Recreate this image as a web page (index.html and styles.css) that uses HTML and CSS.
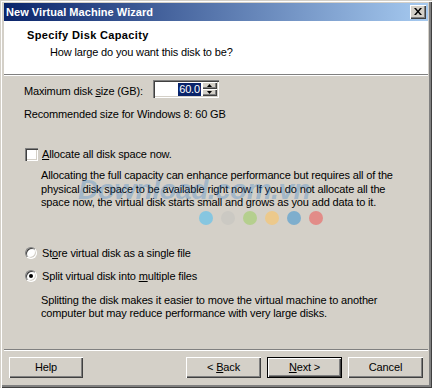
FILE: index.html
```html
<!DOCTYPE html>
<html>
<head>
<meta charset="utf-8">
<link rel="stylesheet" href="styles.css">
</head>
<body>
<div class="window">
  <div class="titlebar">
    <span class="title">New Virtual Machine Wizard</span>
    <span class="close"><svg width="8" height="7" viewBox="0 0 8 7"><path d="M0 0h2l2 2.5L6 0h2L5 3.5 8 7H6L4 4.5 2 7H0l3-3.5z" fill="#000"/></svg></span>
  </div>
  <div class="header">
    <div class="h-title">Specify Disk Capacity</div>
    <div class="h-sub">How large do you want this disk to be?</div>
  </div>
  <div class="body">
    <div class="size-row">
      <span class="size-label">Maximum disk <u>s</u>ize (GB):</span>
      <span class="spin">
        <span class="spin-field"><span class="sel">60.0</span></span>
        <span class="spin-btns">
          <span class="sbtn"><svg width="5" height="3" viewBox="0 0 5 3"><path d="M2.5 0L5 3H0z" fill="#000"/></svg></span>
          <span class="sbtn"><svg width="5" height="3" viewBox="0 0 5 3"><path d="M0 0h5L2.5 3z" fill="#000"/></svg></span>
        </span>
      </span>
    </div>
    <div class="rec">Recommended size for Windows 8: 60 GB</div>
    <div class="opt check-opt"><span class="checkbox"></span><span><u>A</u>llocate all disk space now.</span></div>
    <div class="desc desc1">Allocating the full capacity can enhance performance but requires all of the physical disk space to be available right now. If you do not allocate all the space now, the virtual disk starts small and grows as you add data to it.</div>
    <div class="dots">
      <span class="dot d1"></span><span class="dot d2"></span><span class="dot d3"></span><span class="dot d4"></span><span class="dot d5"></span><span class="dot d6"></span>
    </div>
    <div class="opt radio-opt r1"><span class="radio"></span><span>St<u>o</u>re virtual disk as a single file</span></div>
    <div class="opt radio-opt r2"><span class="radio on"></span><span>Split virtual disk into <u>m</u>ultiple files</span></div>
    <div class="desc desc2">Splitting the disk makes it easier to move the virtual machine to another computer but may reduce performance with very large disks.</div>
    <div class="watermark">Download.com.vn</div>
  </div>
  <div class="buttons">
    <span class="btn help"><span>Help</span></span>
    <span class="spacer"></span>
    <span class="btn"><span>&lt; <u>B</u>ack</span></span>
    <span class="btn default"><span><u>N</u>ext &gt;</span></span>
    <span class="btn"><span>Cancel</span></span>
  </div>
</div>
</body>
</html>
```

FILE: styles.css
```css
* { box-sizing: border-box; }
html, body { margin: 0; padding: 0; }
body {
  width: 432px;
  height: 388px;
  overflow: hidden;
  font-family: "Liberation Sans", Arial, sans-serif;
  font-size: 11px;
  letter-spacing: -0.15px;
  color: #000;
}
u { text-decoration: underline; text-underline-offset: 1px; }
.window {
  width: 432px;
  height: 388px;
  background: #d4d0c8;
  padding: 3px 3px 3px 4px;
  box-shadow: inset 1px 1px 0 #d4d0c8, inset 2px 2px 0 #fff, inset -1px -1px 0 #404040, inset -3px -3px 0 #808080;
  display: flex;
  flex-direction: column;
}
.titlebar {
  height: 18px;
  background: linear-gradient(to right, #0a246a, #a6caf0);
  display: flex;
  align-items: center;
  padding: 0 2px 0 2px;
  margin-right: 1px;
}
.title {
  color: #fff;
  font-weight: bold;
  font-size: 11px;
  flex: 1;
  letter-spacing: 0.05px;
}
.close {
  flex: none;
  width: 16px;
  height: 14px;
  background: #d4d0c8;
  box-shadow: inset 1px 1px 0 #fff, inset -1px -1px 0 #404040, inset -2px -2px 0 #808080;
  display: flex;
  align-items: center;
  justify-content: center;
  padding-right: 1px;
  padding-bottom: 1px;
}
.header {
  background: #fff;
  height: 54px;
  border-bottom: 1px solid #808080;
  box-shadow: 0 1px 0 #fff;
  padding: 8px 0 0 23px;
  margin-right: 1px;
}
.h-title { font-weight: bold; line-height: 13px; letter-spacing: 0.35px; }
.h-sub { padding-left: 23px; margin-top: 4px; line-height: 13px; }
.body {
  position: relative;
  flex: 1;
  padding: 5px 0 0 20px;
}
.size-row {
  display: flex;
  align-items: center;
  height: 18px;
}
.size-label { flex: none; width: 129px; padding-top: 3px; }
.spin {
  flex: none;
  width: 66px;
  height: 18px;
  display: flex;
  background: #fff;
  box-shadow: inset 1px 1px 0 #808080, inset 2px 2px 0 #404040, inset -1px -1px 0 #fff, inset -2px -2px 0 #d4d0c8;
  padding: 2px;
}
.spin-field {
  flex: 1;
  display: flex;
  justify-content: flex-end;
  align-items: center;
  padding-right: 1px;
}
.sel {
  background: #0a246a;
  color: #fff;
  line-height: 13px;
  padding: 0 1px;
}
.spin-btns {
  flex: none;
  width: 15px;
  display: flex;
  flex-direction: column;
}
.sbtn {
  flex: 1;
  background: #d4d0c8;
  box-shadow: inset 1px 1px 0 #fff, inset -1px -1px 0 #404040, inset -2px -2px 0 #808080;
  display: flex;
  align-items: center;
  justify-content: center;
}
.rec { margin-top: 10px; line-height: 13px; }
.opt {
  display: flex;
  align-items: center;
  line-height: 13px;
}
.check-opt { margin-top: 27px; }
.checkbox {
  flex: none;
  width: 13px;
  height: 13px;
  background: #fff;
  box-shadow: inset 1px 1px 0 #808080, inset 2px 2px 0 #404040, inset -1px -1px 0 #fff, inset -2px -2px 0 #d4d0c8;
  margin: 0 4px 0 1px;
}
.desc { padding-left: 17px; width: 379px; line-height: 13.5px; }
.desc1 { margin-top: 8px; }
.dots {
  display: flex;
  gap: 8px;
  padding-left: 175px;
  margin-top: 1px;
}
.dot { width: 14px; height: 14px; border-radius: 50%; }
.d1 { background: #86c6e0; }
.d2 { background: #cbc9c3; }
.d3 { background: #b5cf8e; }
.d4 { background: #ecc98c; }
.d5 { background: #7eaecd; }
.d6 { background: #e28c88; }
.radio-opt.r1 { margin-top: 22px; }
.radio-opt.r2 { margin-top: 10px; }
.radio {
  flex: none;
  width: 12px;
  height: 12px;
  border-radius: 50%;
  background: #fff;
  border: 1px solid #808080;
  border-right-color: #fff;
  border-bottom-color: #fff;
  box-shadow: inset 1px 1px 0 #404040, inset -1px -1px 0 #d4d0c8;
  margin: 0 5px 0 1px;
  display: flex;
  align-items: center;
  justify-content: center;
}
.radio.on::after {
  content: "";
  width: 4px;
  height: 4px;
  border-radius: 50%;
  background: #000;
}
.desc2 { margin-top: 11px; }
.watermark {
  position: absolute;
  left: 74px;
  top: 99px;
  font-size: 28px;
  font-weight: bold;
  font-style: italic;
  color: rgba(40, 120, 200, 0.3);
  letter-spacing: -0.5px;
  pointer-events: none;
}
.buttons {
  border-top: 1px solid #808080;
  box-shadow: inset 0 1px 0 #fff;
  height: 34px;
  margin-bottom: 2px;
  margin-right: 1px;
  display: flex;
  align-items: flex-start;
  padding: 7px 5px 0 5px;
  gap: 6px;
}
.spacer { flex: 1; }
.btn {
  flex: none;
  width: 75px;
  height: 21px;
  display: flex;
  align-items: center;
  justify-content: center;
  background: #d4d0c8;
  box-shadow: inset 1px 1px 0 #fff, inset -1px -1px 0 #404040, inset -2px -2px 0 #808080;
  line-height: 13px;
}
.btn.help { width: 74px; }
.btn.default {
  border: 1px solid #000;
}
```
